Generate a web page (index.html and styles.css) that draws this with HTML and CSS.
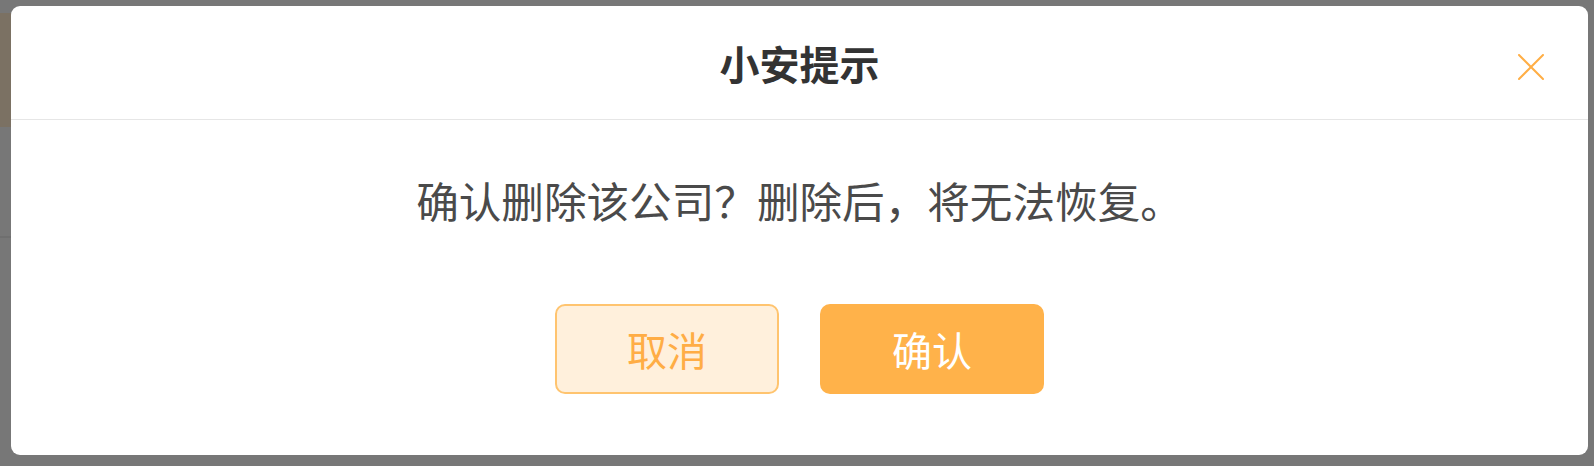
FILE: index.html
```html
<!DOCTYPE html>
<html lang="zh-CN">
<head>
<meta charset="utf-8">
<title>小安提示</title>
<link rel="stylesheet" href="styles.css">
</head>
<body>
<div class="overlay">
  <div class="dialog">
    <div class="dialog-header">
      <h2 class="dialog-title">小安提示</h2>
      <button class="dialog-close" aria-label="关闭">
        <svg width="26" height="26" viewBox="0 0 26 26"><path d="M1 1 L25 25 M25 1 L1 25" stroke="#ffae45" stroke-width="2" stroke-linecap="round" fill="none"/></svg>
      </button>
    </div>
    <div class="dialog-body">
      <p class="dialog-message">确认删除该公司？删除后，将无法恢复。</p>
      <div class="dialog-actions">
        <button class="btn btn-cancel">取消</button>
        <button class="btn btn-confirm">确认</button>
      </div>
    </div>
  </div>
</div>
</body>
</html>
```
FILE: styles.css
```css
html, body {
  margin: 0;
  padding: 0;
}
body {
  width: 1594px;
  height: 466px;
  overflow: hidden;
  background:
    linear-gradient(#7b7163, #7b7163) 0 13px / 11px 114px no-repeat,
    linear-gradient(#6f6f6f, #6f6f6f) 0 236px / 11px 2px no-repeat,
    #777777;
  font-family: "Noto Sans CJK SC", "Noto Sans", sans-serif;
}
.overlay {
  padding: 6px 6px 0 11px;
}
.dialog {
  position: relative;
  width: 1577px;
  height: 449px;
  background: #ffffff;
  border-radius: 9px;
  display: flex;
  flex-direction: column;
}
.dialog-header {
  height: 113px;
  border-bottom: 1px solid #e6e6e6;
  display: flex;
  align-items: center;
  justify-content: center;
}
.dialog-title {
  margin: 0;
  font-size: 40px;
  font-weight: 700;
  color: #333333;
  line-height: 1;
}
.dialog-close {
  position: absolute;
  top: 48px;
  right: 44px;
  width: 26px;
  height: 26px;
  padding: 0;
  border: none;
  background: transparent;
  display: flex;
}
.dialog-body {
  flex: 1;
  display: flex;
  flex-direction: column;
  align-items: center;
  padding-top: 50px;
}
.dialog-message {
  margin: 0;
  font-size: 42.6px;
  line-height: 60px;
  color: #4a4a4a;
}
.dialog-actions {
  display: flex;
  gap: 41px;
  margin-top: 74px;
}
.btn {
  width: 224px;
  height: 90px;
  border-radius: 10px;
  font-family: "Noto Sans CJK SC", "Noto Sans", sans-serif;
  font-size: 40px;
  font-weight: 400;
  display: flex;
  align-items: center;
  justify-content: center;
  padding: 0;
}
.btn-cancel {
  background: #fff0dc;
  border: 2px solid #ffc46f;
  color: #ffad45;
}
.btn-confirm {
  background: #ffb24a;
  border: none;
  color: #ffffff;
}
```
